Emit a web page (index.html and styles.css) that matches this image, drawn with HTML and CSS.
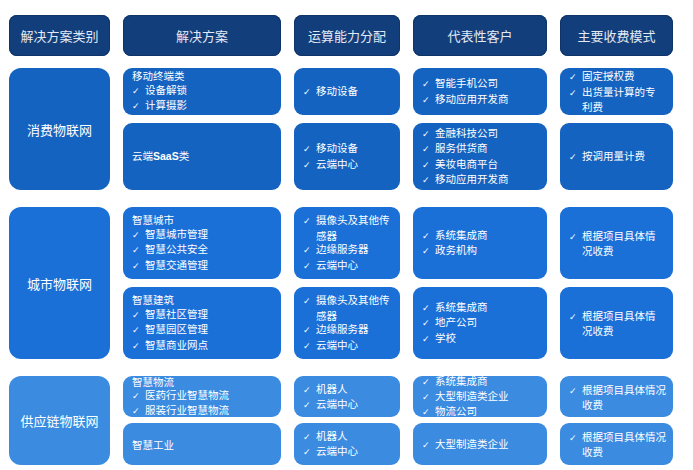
FILE: index.html
```html
<!DOCTYPE html>
<html lang="zh">
<head>
<meta charset="utf-8">
<link rel="stylesheet" href="styles.css">
</head>
<body>
<div class="page">
  <div class="grid head">
    <div class="hcell">解决方案类别</div>
    <div class="hcell">解决方案</div>
    <div class="hcell">运算能力分配</div>
    <div class="hcell">代表性客户</div>
    <div class="hcell">主要收费模式</div>
  </div>

  <div class="grid group g1">
    <div class="cat">消费物联网</div>
    <div class="cell">
      <div class="ln">移动终端类</div>
      <div class="ln"><span class="ck">✓</span>设备解锁</div>
      <div class="ln"><span class="ck">✓</span>计算摄影</div>
    </div>
    <div class="cell">
      <div class="ln"><span class="ck">✓</span>移动设备</div>
    </div>
    <div class="cell">
      <div class="ln"><span class="ck">✓</span>智能手机公司</div>
      <div class="ln"><span class="ck">✓</span>移动应用开发商</div>
    </div>
    <div class="cell">
      <div class="ln"><span class="ck">✓</span>固定授权费</div>
      <div class="ln"><span class="ck">✓</span>出货量计算的专</div>
      <div class="ln cont">利费</div>
    </div>
    <div class="cell">
      <div class="ln">云端<b class="latin">SaaS</b>类</div>
    </div>
    <div class="cell">
      <div class="ln"><span class="ck">✓</span>移动设备</div>
      <div class="ln"><span class="ck">✓</span>云端中心</div>
    </div>
    <div class="cell">
      <div class="ln"><span class="ck">✓</span>金融科技公司</div>
      <div class="ln"><span class="ck">✓</span>服务供货商</div>
      <div class="ln"><span class="ck">✓</span>美妆电商平台</div>
      <div class="ln"><span class="ck">✓</span>移动应用开发商</div>
    </div>
    <div class="cell">
      <div class="ln"><span class="ck">✓</span>按调用量计费</div>
    </div>
  </div>

  <div class="grid group g2">
    <div class="cat">城市物联网</div>
    <div class="cell">
      <div class="ln">智慧城市</div>
      <div class="ln"><span class="ck">✓</span>智慧城市管理</div>
      <div class="ln"><span class="ck">✓</span>智慧公共安全</div>
      <div class="ln"><span class="ck">✓</span>智慧交通管理</div>
    </div>
    <div class="cell">
      <div class="ln"><span class="ck">✓</span>摄像头及其他传</div>
      <div class="ln cont">感器</div>
      <div class="ln"><span class="ck">✓</span>边缘服务器</div>
      <div class="ln"><span class="ck">✓</span>云端中心</div>
    </div>
    <div class="cell">
      <div class="ln"><span class="ck">✓</span>系统集成商</div>
      <div class="ln"><span class="ck">✓</span>政务机构</div>
    </div>
    <div class="cell">
      <div class="ln"><span class="ck">✓</span>根据项目具体情</div>
      <div class="ln cont">况收费</div>
    </div>
    <div class="cell">
      <div class="ln">智慧建筑</div>
      <div class="ln"><span class="ck">✓</span>智慧社区管理</div>
      <div class="ln"><span class="ck">✓</span>智慧园区管理</div>
      <div class="ln"><span class="ck">✓</span>智慧商业网点</div>
    </div>
    <div class="cell">
      <div class="ln"><span class="ck">✓</span>摄像头及其他传</div>
      <div class="ln cont">感器</div>
      <div class="ln"><span class="ck">✓</span>边缘服务器</div>
      <div class="ln"><span class="ck">✓</span>云端中心</div>
    </div>
    <div class="cell">
      <div class="ln"><span class="ck">✓</span>系统集成商</div>
      <div class="ln"><span class="ck">✓</span>地产公司</div>
      <div class="ln"><span class="ck">✓</span>学校</div>
    </div>
    <div class="cell">
      <div class="ln"><span class="ck">✓</span>根据项目具体情</div>
      <div class="ln cont">况收费</div>
    </div>
  </div>

  <div class="grid group g3">
    <div class="cat">供应链物联网</div>
    <div class="cell">
      <div class="ln">智慧物流</div>
      <div class="ln"><span class="ck">✓</span>医药行业智慧物流</div>
      <div class="ln"><span class="ck">✓</span>服装行业智慧物流</div>
    </div>
    <div class="cell">
      <div class="ln"><span class="ck">✓</span>机器人</div>
      <div class="ln"><span class="ck">✓</span>云端中心</div>
    </div>
    <div class="cell">
      <div class="ln"><span class="ck">✓</span>系统集成商</div>
      <div class="ln"><span class="ck">✓</span>大型制造类企业</div>
      <div class="ln"><span class="ck">✓</span>物流公司</div>
    </div>
    <div class="cell">
      <div class="ln"><span class="ck">✓</span>根据项目具体情况</div>
      <div class="ln cont">收费</div>
    </div>
    <div class="cell">
      <div class="ln">智慧工业</div>
    </div>
    <div class="cell">
      <div class="ln"><span class="ck">✓</span>机器人</div>
      <div class="ln"><span class="ck">✓</span>云端中心</div>
    </div>
    <div class="cell">
      <div class="ln"><span class="ck">✓</span>大型制造类企业</div>
    </div>
    <div class="cell">
      <div class="ln"><span class="ck">✓</span>根据项目具体情况</div>
      <div class="ln cont">收费</div>
    </div>
  </div>
</div>
</body>
</html>
```

FILE: styles.css
```css
html, body {
  margin: 0;
  padding: 0;
  background: #ffffff;
}

.page {
  padding: 15px 0 0 9px;
  font-family: "Noto Sans CJK SC", "Noto Sans", sans-serif;
  color: #ffffff;
}

.grid {
  display: grid;
  grid-template-columns: 101px 158px 106px 134px 113px;
  column-gap: 13px;
}

.head {
  grid-template-rows: 41px;
}

.hcell {
  background: #123f7c;
  border-radius: 8px;
  display: flex;
  align-items: center;
  justify-content: center;
  font-size: 13px;
  color: #e3e9f3;
  box-shadow: inset 0 0 0 1px #0e3468;
}

.group {
  row-gap: 8px;
}

.g1 {
  margin-top: 12px;
  grid-template-rows: 47px 67px;
}

.g2 {
  margin-top: 17px;
  grid-template-rows: 72px 72px;
}

.g3 {
  margin-top: 17px;
  grid-template-rows: 41px 42px;
  row-gap: 6px;
}

.cat {
  grid-row: span 2;
  border-radius: 12px;
  display: flex;
  align-items: center;
  justify-content: center;
  font-size: 13px;
}

.cell {
  border-radius: 9px;
  display: flex;
  flex-direction: column;
  justify-content: center;
  padding: 0 9px;
  font-size: 10.5px;
  line-height: 13.5px;
}

.g3 .cell {
  line-height: 13px;
}

.g1 .cat, .g1 .cell { background: #1563c0; }
.g2 .cat, .g2 .cell { background: #1b70d8; }
.g3 .cat, .g3 .cell { background: #3b8be1; }

.ln {
  white-space: nowrap;
}

.ck {
  display: inline-block;
  width: 13px;
  font-family: "DejaVu Sans", sans-serif;
  font-size: 9px;
}

.cont {
  padding-left: 13px;
}

.latin {
  font-family: "Liberation Sans", sans-serif;
  font-weight: bold;
}
```
